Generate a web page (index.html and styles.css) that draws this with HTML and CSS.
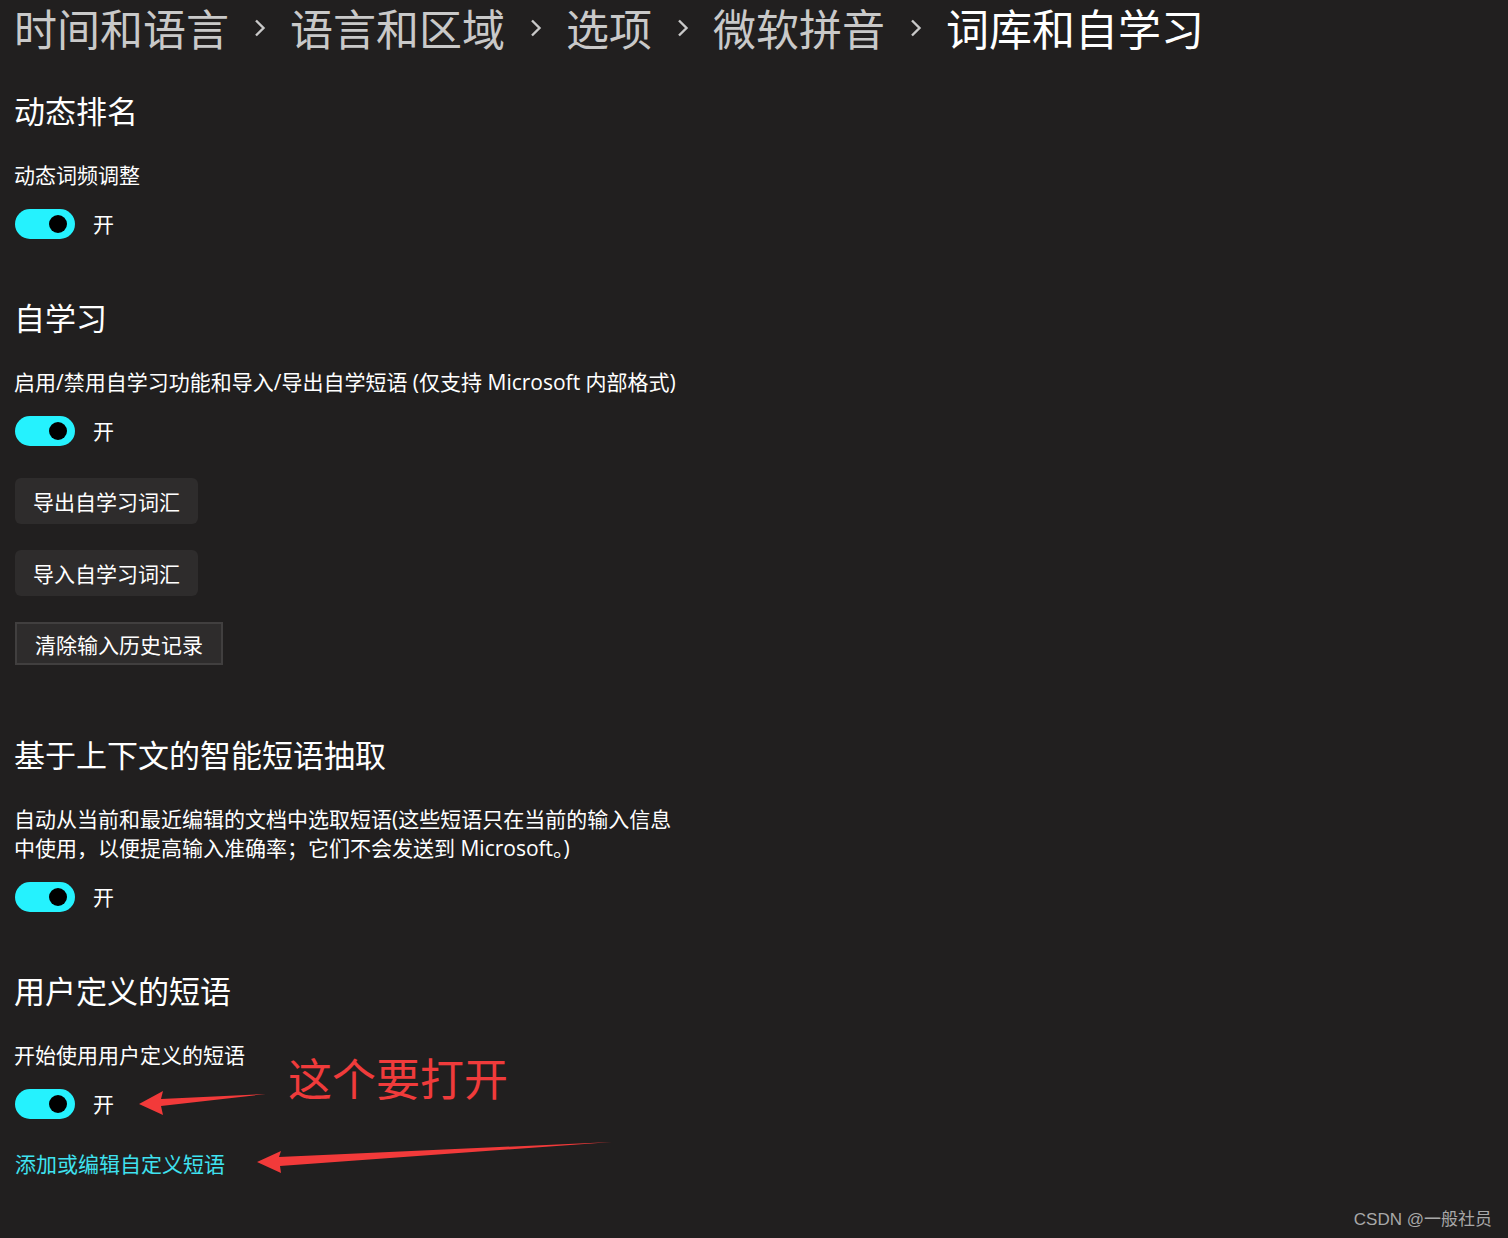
FILE: index.html
```html
<!DOCTYPE html>
<html>
<head>
  <meta charset="utf-8">
  <title>词库和自学习</title>
  <link rel="stylesheet" href="styles.css">
</head>
<body>
  <div class="page">
    <nav class="breadcrumb">
      <span class="crumb">时间和语言</span>
      <span class="sep"><svg width="12" height="18" viewBox="0 0 12 18"><polyline points="2,1.5 9.5,9 2,16.5" fill="none" stroke="#c9c9c9" stroke-width="2.4"/></svg></span>
      <span class="crumb">语言和区域</span>
      <span class="sep"><svg width="12" height="18" viewBox="0 0 12 18"><polyline points="2,1.5 9.5,9 2,16.5" fill="none" stroke="#c9c9c9" stroke-width="2.4"/></svg></span>
      <span class="crumb">选项</span>
      <span class="sep"><svg width="12" height="18" viewBox="0 0 12 18"><polyline points="2,1.5 9.5,9 2,16.5" fill="none" stroke="#c9c9c9" stroke-width="2.4"/></svg></span>
      <span class="crumb">微软拼音</span>
      <span class="sep"><svg width="12" height="18" viewBox="0 0 12 18"><polyline points="2,1.5 9.5,9 2,16.5" fill="none" stroke="#c9c9c9" stroke-width="2.4"/></svg></span>
      <span class="crumb current">词库和自学习</span>
    </nav>

    <section class="group first">
      <h2 class="group-title">动态排名</h2>
      <div class="setting-label">动态词频调整</div>
      <div class="toggle-row">
        <span class="toggle"><span class="knob"></span></span>
        <span class="toggle-text">开</span>
      </div>
    </section>

    <section class="group">
      <h2 class="group-title">自学习</h2>
      <div class="setting-label">启用/禁用自学习功能和导入/导出自学短语 (仅支持 Microsoft 内部格式)</div>
      <div class="toggle-row">
        <span class="toggle"><span class="knob"></span></span>
        <span class="toggle-text">开</span>
      </div>
      <div class="buttons">
        <button class="btn">导出自学习词汇</button>
        <button class="btn">导入自学习词汇</button>
        <button class="btn btn-focus">清除输入历史记录</button>
      </div>
    </section>

    <section class="group wide-gap">
      <h2 class="group-title">基于上下文的智能短语抽取</h2>
      <div class="setting-label wrap">自动从当前和最近编辑的文档中选取短语(这些短语只在当前的输入信息中使用，以便提高输入准确率；它们不会发送到 Microsoft。)</div>
      <div class="toggle-row">
        <span class="toggle"><span class="knob"></span></span>
        <span class="toggle-text">开</span>
      </div>
    </section>

    <section class="group">
      <h2 class="group-title">用户定义的短语</h2>
      <div class="setting-label">开始使用用户定义的短语</div>
      <div class="toggle-row">
        <span class="toggle"><span class="knob"></span></span>
        <span class="toggle-text">开</span>
      </div>
      <a class="link" href="#">添加或编辑自定义短语</a>
    </section>
  </div>

  <!-- 截图上的标注 -->
  <div class="note">这个要打开</div>
  <svg class="arrows" width="1508" height="1238" viewBox="0 0 1508 1238">
    <polygon points="139,1104 163,1091 161,1099 266,1094 161,1106 163,1115" fill="#f23a3a"/>
    <polygon points="257,1162 281,1151 279,1157 612,1142 280,1166 281,1173" fill="#f23a3a"/>
  </svg>
  <div class="watermark">CSDN @一般社员</div>
</body>
</html>
```

FILE: styles.css
```css
html, body {
  margin: 0;
  padding: 0;
}

body {
  width: 1508px;
  height: 1238px;
  position: relative;
  overflow: hidden;
  background-color: #211f1f;
  color: #ffffff;
  font-family: "Open Sans", "Noto Sans CJK SC", sans-serif;
}

.page {
  padding-left: 14px;
}

.breadcrumb {
  display: flex;
  align-items: center;
  height: 54px;
  font-family: "Noto Sans CJK SC", sans-serif;
  font-size: 43px;
  line-height: 54px;
  color: #c9c9c9;
}

.breadcrumb .sep {
  display: flex;
  justify-content: center;
  align-items: center;
  width: 61px;
  padding-top: 2px;
}

.breadcrumb .current {
  color: #ffffff;
}

.group {
  margin-top: 60px;
}

.group.first {
  margin-top: 37px;
}

.group.wide-gap {
  margin-top: 70px;
}

.group-title {
  margin: 0;
  font-family: "Noto Sans CJK SC", sans-serif;
  font-size: 31px;
  font-weight: normal;
  line-height: 38px;
  height: 38px;
}

.setting-label {
  margin-top: 32px;
  font-size: 21px;
  line-height: 29px;
}

.setting-label.wrap {
  width: 665px;
}

.toggle-row {
  display: flex;
  align-items: center;
  margin-top: 20px;
  height: 28px;
  padding-left: 1px;
}

.toggle {
  display: flex;
  align-items: center;
  justify-content: flex-end;
  box-sizing: border-box;
  width: 60px;
  height: 30px;
  padding-right: 8px;
  border-radius: 15px;
  background-color: #25f2fe;
}

.knob {
  width: 18px;
  height: 18px;
  border-radius: 50%;
  background-color: #000000;
}

.toggle-text {
  margin-left: 18px;
  font-size: 21px;
  line-height: 28px;
}

.buttons {
  display: flex;
  flex-direction: column;
  align-items: flex-start;
  margin-top: 33px;
  gap: 26px;
}

.btn {
  height: 46px;
  margin-left: 1px;
  padding: 0 18px;
  background-color: #2e2c2c;
  color: #ffffff;
  border: none;
  border-radius: 6px;
  font-family: "Noto Sans CJK SC", sans-serif;
  font-size: 21px;
  cursor: pointer;
}

.btn-focus {
  height: 43px;
  padding: 0 18px;
  border: 2px solid #413f3f;
  border-radius: 0;
}

.link {
  display: block;
  margin-top: 32px;
  margin-left: 1px;
  font-size: 21px;
  line-height: 29px;
  color: #3fe2f0;
  text-decoration: none;
}

.note {
  position: absolute;
  left: 288px;
  top: 1047px;
  font-family: "Noto Sans CJK SC", sans-serif;
  font-size: 44px;
  line-height: 60px;
  color: #f03b3b;
}

.arrows {
  position: absolute;
  left: 0;
  top: 0;
  pointer-events: none;
}

.watermark {
  position: absolute;
  right: 16px;
  bottom: 8px;
  font-family: "Liberation Sans", "Noto Sans CJK SC", sans-serif;
  font-size: 17px;
  color: #a8a8a8;
}
```
